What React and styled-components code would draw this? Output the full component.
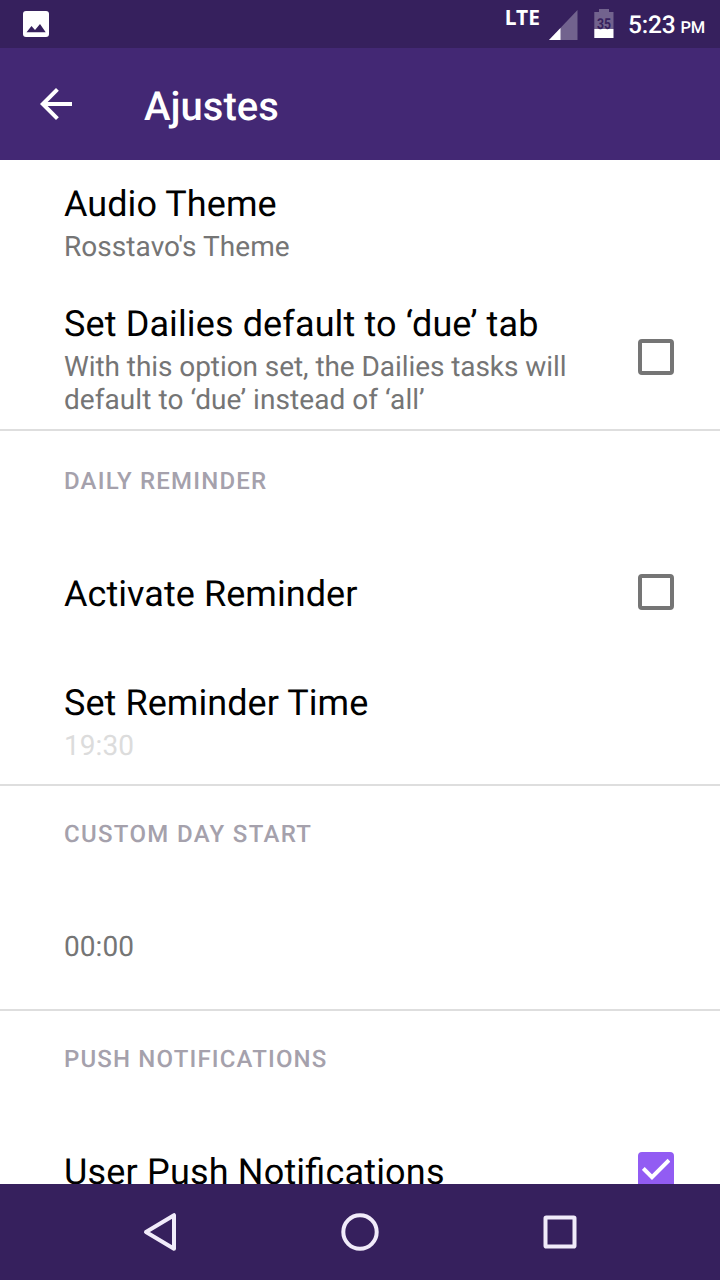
import React from 'react';
import styled, { createGlobalStyle } from 'styled-components';

const GlobalStyle = createGlobalStyle`
  * { box-sizing: border-box; }
  body {
    margin: 0;
    background: #fff;
    font-family: Roboto, "Liberation Sans", sans-serif;
    text-rendering: geometricPrecision;
  }
  svg { display: block; }
`;

const Screen = styled.div`
  width: 720px;
  height: 1280px;
  display: flex;
  flex-direction: column;
  overflow: hidden;
  background: #fff;
`;

const StatusBar = styled.header`
  height: 48px;
  flex: none;
  display: flex;
  justify-content: space-between;
  background: #36205d;
  color: #fff;
  padding: 0 15px 0 23px;
`;

const NotificationIcons = styled.div`
  padding-top: 11px;
`;

const SystemIcons = styled.div`
  display: flex;
  align-items: flex-start;
`;

const NetworkLabel = styled.span`
  font: 700 21px/24px "Noto Sans", sans-serif;
  margin: 6px 9px 0 0;
`;

const SignalIcon = styled.svg`
  margin: 10px 16px 0 0;
`;

const BatteryIcon = styled.svg`
  margin: 9px 14px 0 0;
`;

const Clock = styled.span`
  font-size: 24.5px;
  font-weight: 500;
  line-height: 30px;
  letter-spacing: -0.2px;
  margin-top: 10px;
  white-space: nowrap;
`;

const Meridiem = styled.small`
  font-size: 16.5px;
  margin-left: 5px;
`;

const Toolbar = styled.div`
  height: 112px;
  flex: none;
  display: flex;
  align-items: center;
  background: #432874;
  padding-left: 32px;
`;

const BackButton = styled.button`
  border: 0;
  padding: 0;
  background: none;
  color: #fff;
  width: 112px;
`;

const ToolbarTitle = styled.h1`
  margin: 6px 0 0;
  font-size: 40px;
  font-weight: 500;
  line-height: 48px;
  color: #fff;
`;

const Content = styled.main`
  flex: 1;
  min-height: 0;
  overflow: hidden;
`;

const Section = styled.section`
  height: ${(p) => p.$height}px;
  border-bottom: 2px solid #dedede;
`;

const Category = styled.h2`
  margin: 0;
  padding: ${(p) => p.$top ?? 34}px 64px 0;
  height: 105px;
  font-size: 24px;
  font-weight: 500;
  line-height: 28px;
  letter-spacing: ${(p) => p.$tracking ?? 1.2}px;
  text-transform: uppercase;
  color: #a5a1ac;
`;

const Row = styled.div`
  height: ${(p) => p.$height}px;
  display: flex;
  justify-content: space-between;
  align-items: flex-start;
  padding: ${(p) => p.$top ?? 23}px 46px 0 64px;
`;

const Title = styled.div`
  font-size: 36px;
  line-height: 42px;
  letter-spacing: ${(p) => p.$tracking ?? 0.06}px;
  font-feature-settings: "liga" 1;
  color: #000;
  white-space: nowrap;
`;

const Summary = styled.div`
  margin-top: 5px;
  width: 530px;
  font-size: 28px;
  line-height: 33px;
  letter-spacing: 0.06px;
  color: ${(p) => (p.$disabled ? '#dcdcdc' : '#757575')};
`;

const TightText = styled.span`
  letter-spacing: -0.07px;
`;

const Checkbox = styled.div`
  flex: none;
  width: 36px;
  height: 36px;
  margin-top: ${(p) => p.$offset ?? 0}px;
  border: 4px solid ${(p) => (p.$checked ? '#925cf3' : '#757575')};
  border-radius: 4px;
  background: ${(p) => (p.$checked ? '#925cf3' : 'transparent')};
`;

const NavBar = styled.nav`
  height: 96px;
  flex: none;
  display: flex;
  justify-content: center;
  align-items: center;
  background: #36205d;
`;

const NavButton = styled.button`
  width: 200px;
  height: 96px;
  border: 0;
  padding: 0;
  background: none;
  display: flex;
  justify-content: center;
  align-items: center;
`;

function Preference({ title, tracking, summary, disabled, height, top, checkbox, checked, offset }) {
  return (
    <Row $height={height} $top={top}>
      <div>
        {title && <Title $tracking={tracking}>{title}</Title>}
        {summary && <Summary $disabled={disabled}>{summary}</Summary>}
      </div>
      {checkbox && (
        <Checkbox $checked={checked} $offset={offset}>
          {checked && (
            <svg width="28" height="28" viewBox="0 0 28 28" fill="none" stroke="#fff" strokeWidth="4">
              <path d="M1.3 12.5L10 21.2L27 4.2" />
            </svg>
          )}
        </Checkbox>
      )}
    </Row>
  );
}

export default function App() {
  return (
    <Screen>
      <GlobalStyle />
      <StatusBar>
        <NotificationIcons>
          <svg width="26" height="26" viewBox="0 0 26 26">
            <rect width="26" height="26" rx="3" fill="#fff" />
            <path d="M3.5 21.3L8.5 15L12 19L17 13L22.7 21.3Z" fill="#36205d" />
          </svg>
        </NotificationIcons>
        <SystemIcons>
          <NetworkLabel>LTE</NetworkLabel>
          <SignalIcon width="29" height="30" viewBox="0 0 29 30">
            <path d="M28.5 0V30H0Z" fill="#fff" fillOpacity="0.3" />
            <path d="M11.5 18V30H0Z" fill="#fff" />
          </SignalIcon>
          <BatteryIcon width="20" height="29" viewBox="0 0 20 29">
            <path d="M5 0H15V3H19.5V20H0.3V3H5Z" fill="#fff" fillOpacity="0.3" />
            <rect x="0.3" y="20" width="19.2" height="9" fill="#fff" />
            <text
              x="3"
              y="20"
              textLength="14"
              lengthAdjust="spacingAndGlyphs"
              fontSize="15"
              fontWeight="700"
              fill="#36205d"
            >
              35
            </text>
          </BatteryIcon>
          <Clock>5:23<Meridiem>PM</Meridiem></Clock>
        </SystemIcons>
      </StatusBar>
      <Toolbar>
        <BackButton aria-label="Back">
          <svg width="48" height="48" viewBox="0 0 24 24" fill="currentColor">
            <path d="M20 11H7.83l5.59-5.59L12 4l-8 8 8 8 1.41-1.41L7.83 13H20v-2z" />
          </svg>
        </BackButton>
        <ToolbarTitle>Ajustes</ToolbarTitle>
      </Toolbar>
      <Content>
        <Section $height={271}>
          <Preference title="Audio Theme" summary="Rosstavo's Theme" height={120} />
          <Preference
            title="Set Dailies default to ‘due’ tab"
            tracking={0.12}
            summary={
              <>
                <TightText>With this option set, the Dailies tasks will</TightText> default to ‘due’ instead of ‘all’
              </>
            }
            height={149}
            checkbox
            offset={36}
          />
        </Section>
        <Section $height={355}>
          <Category $top={36}>Daily Reminder</Category>
          <Preference title="Activate Reminder" height={112} top={37} checkbox offset={1} />
          <Preference title="Set Reminder Time" summary="19:30" disabled height={136} top={34} />
        </Section>
        <Section $height={225}>
          <Category $tracking={1.32}>Custom Day Start</Category>
          <Preference summary="00:00" height={118} top={34} />
        </Section>
        <Section $height={355}>
          <Category $tracking={1.16}>Push Notifications</Category>
          <Preference
            title="User Push Notifications"
            tracking={0.18}
            height={112}
            top={35}
            checkbox
            checked
            offset={1}
          />
        </Section>
      </Content>
      <NavBar>
        <NavButton aria-label="Back">
          <svg width="40" height="40" viewBox="0 0 40 40" fill="none" stroke="#f1ebfa" strokeWidth="4" strokeLinejoin="round">
            <path d="M34 3.2V36.8L6 20Z" />
          </svg>
        </NavButton>
        <NavButton aria-label="Home">
          <svg width="40" height="40" viewBox="0 0 40 40" fill="none" stroke="#f1ebfa" strokeWidth="4">
            <circle cx="20" cy="20" r="16.7" />
          </svg>
        </NavButton>
        <NavButton aria-label="Recent apps">
          <svg width="40" height="40" viewBox="0 0 40 40" fill="none" stroke="#f1ebfa" strokeWidth="4" strokeLinejoin="round">
            <rect x="5.5" y="5.5" width="29" height="29" rx="0.8" />
          </svg>
        </NavButton>
      </NavBar>
    </Screen>
  );
}
